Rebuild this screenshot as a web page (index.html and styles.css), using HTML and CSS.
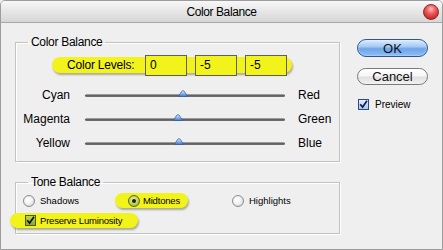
FILE: index.html
```html
<!DOCTYPE html>
<html>
<head>
<meta charset="utf-8">
<title>Color Balance</title>
<link rel="stylesheet" href="styles.css">
</head>
<body>
<div class="window">
  <div class="titlebar">
    <span></span>
    <span class="title">Color Balance</span>
    <span class="close"></span>
  </div>
  <div class="body">
    <div class="left">
      <fieldset class="group g1">
        <legend>Color Balance</legend>
        <div class="levels">
          <span class="levels-label">Color Levels:</span>
          <span class="field">0</span>
          <span class="field">-5</span>
          <span class="field">-5</span>
        </div>
        <div class="slider-row">
          <span class="lab-l">Cyan</span>
          <div class="track"><span class="thumb" style="left:98px"><svg width="10" height="7" viewBox="0 0 10 7"><defs><linearGradient id="tg" x1="0" y1="0" x2="0" y2="1"><stop offset="0" stop-color="#e4eefc"/><stop offset="0.5" stop-color="#8fb6ea"/><stop offset="1" stop-color="#3b74c8"/></linearGradient></defs><path d="M0.5 6.5 L3.6 1.4 Q5 -0.2 6.4 1.4 L9.5 6.5 Z" fill="url(#tg)" stroke="#3a62a0" stroke-width="0.8"/></svg></span></div>
          <span class="lab-r">Red</span>
        </div>
        <div class="slider-row">
          <span class="lab-l">Magenta</span>
          <div class="track"><span class="thumb" style="left:93px"><svg width="10" height="7" viewBox="0 0 10 7"><path d="M0.5 6.5 L3.6 1.4 Q5 -0.2 6.4 1.4 L9.5 6.5 Z" fill="url(#tg)" stroke="#3a62a0" stroke-width="0.8"/></svg></span></div>
          <span class="lab-r">Green</span>
        </div>
        <div class="slider-row">
          <span class="lab-l">Yellow</span>
          <div class="track"><span class="thumb" style="left:94px"><svg width="10" height="7" viewBox="0 0 10 7"><path d="M0.5 6.5 L3.6 1.4 Q5 -0.2 6.4 1.4 L9.5 6.5 Z" fill="url(#tg)" stroke="#3a62a0" stroke-width="0.8"/></svg></span></div>
          <span class="lab-r">Blue</span>
        </div>
      </fieldset>
      <fieldset class="group g2">
        <legend>Tone Balance</legend>
        <div class="tones">
          <div class="opt shadows"><span class="radio"></span><span>Shadows</span></div>
          <div class="opt midtones hl"><span class="radio on"><span class="dot"></span></span><span>Midtones</span></div>
          <div class="opt highlights"><span class="radio"></span><span>Highlights</span></div>
        </div>
        <div class="lum hl">
          <span class="check green"><svg width="11" height="11" viewBox="0 0 11 11"><path d="M2.2 5.2 L4.6 8 L9 1.8" fill="none" stroke="#0c1a0c" stroke-width="1.7"/></svg></span>
          <span>Preserve Luminosity</span>
        </div>
      </fieldset>
    </div>
    <div class="right">
      <div class="btn ok">OK</div>
      <div class="btn cancel">Cancel</div>
      <div class="preview">
        <span class="check blue"><svg width="11" height="11" viewBox="0 0 11 11"><path d="M2.2 5.2 L4.6 8 L9 1.8" fill="none" stroke="#0f1f55" stroke-width="1.7"/></svg></span>
        <span>Preview</span>
      </div>
    </div>
  </div>
</div>
</body>
</html>
```
FILE: styles.css
```css
html, body {
  margin: 0;
  padding: 0;
  background: #efefef;
}
body {
  font-family: "Liberation Sans", Arial, sans-serif;
  color: #000;
}
.window {
  width: 443px;
  height: 250px;
  box-sizing: border-box;
  border: 1px solid #9c9c9c;
  border-radius: 5px 5px 0 0;
  background: #efefef;
  overflow: hidden;
}
.titlebar {
  height: 21px;
  border-bottom: 1px solid #a8a8a8;
  background: linear-gradient(#f8f8f8, #e6e6e6 50%, #d6d6d6);
  display: grid;
  grid-template-columns: 1fr auto 1fr;
  align-items: center;
}
.title {
  font-size: 12px;
  letter-spacing: -0.4px;
  padding-top: 1px;
}
.close {
  justify-self: end;
  margin-right: 3px;
  width: 14px;
  height: 14px;
  border-radius: 50%;
  border: 1px solid #8e2a2a;
  background: radial-gradient(circle at 50% 30%, #ffc0c0 0, #f06060 35%, #c82424 80%, #a01818 100%);
  margin-top: 1px;
}
.body {
  display: flex;
  align-items: flex-start;
  gap: 17px;
  padding: 12px 0 0 14px;
}
.left {
  width: 325px;
}
.group {
  margin: 0;
  padding: 0;
  min-width: 0;
  border: 1px solid #c2c2c2;
  box-shadow: 1px 1px 0 #fff, inset 1px 1px 0 #fff;
}
.group legend {
  margin-left: 12px;
  padding: 0 3px;
  font-size: 12px;
  line-height: 14px;
  letter-spacing: -0.3px;
}
.g1 {
  padding-bottom: 6px;
}
.g2 {
  margin-top: 13px;
  padding-bottom: 5px;
}
.hl {
  background: #f3f31c;
  box-shadow: 1px 2px 2px rgba(90, 90, 40, 0.45);
}
.levels {
  margin: 8px 0 10px 36px;
  width: 240px;
  height: 16px;
  box-sizing: border-box;
  padding: 0 5px 0 15px;
  display: flex;
  align-items: center;
  background: #f3f31c;
  border-radius: 8px;
  box-shadow: 1px 2px 2px rgba(90, 90, 40, 0.45);
}
.levels-label {
  width: 78px;
  font-size: 12px;
  letter-spacing: -0.2px;
}
.field {
  flex: none;
  width: 42px;
  height: 21px;
  box-sizing: border-box;
  border: 1px solid #5e5e5e;
  background: #f3f31c;
  padding-left: 4px;
  font-size: 12px;
  line-height: 19px;
}
.field + .field {
  margin-left: 8px;
}
.slider-row {
  height: 24px;
  display: flex;
  align-items: center;
  font-size: 12px;
}
.lab-l {
  width: 54px;
  text-align: right;
}
.track {
  position: relative;
  margin-left: 15px;
  width: 200px;
  height: 3px;
  border-radius: 2px;
  background: linear-gradient(#b8b8b8, #505050 60%, #808080);
}
.thumb {
  position: absolute;
  top: -4px;
  width: 10px;
  height: 7px;
  margin-left: -5px;
}
.thumb svg {
  display: block;
}
.lab-r {
  margin-left: 13px;
}
.tones {
  margin-top: 4px;
  height: 15px;
  display: flex;
  align-items: center;
}
.opt {
  display: flex;
  align-items: center;
  font-size: 9.5px;
  height: 15px;
  box-sizing: border-box;
}
.shadows {
  margin-left: 7px;
  width: 92px;
  gap: 5px;
}
.midtones {
  width: 73px;
  padding-left: 13px;
  border-radius: 8px;
  gap: 3px;
  letter-spacing: -0.2px;
}
.highlights {
  margin-left: 44px;
  gap: 5px;
}
.radio {
  flex: none;
  width: 12px;
  height: 12px;
  box-sizing: border-box;
  border-radius: 50%;
  border: 1px solid #8c8c8c;
  background: radial-gradient(circle at 40% 40%, #ffffff 0, #f4f4f4 40%, #c8c8c8 100%);
  display: flex;
  align-items: center;
  justify-content: center;
}
.radio.on {
  border-color: #5c6a2c;
  background: radial-gradient(circle at 45% 40%, #eef4b0 0, #b8cc4c 60%, #7c9430 100%);
}
.dot {
  width: 4px;
  height: 4px;
  border-radius: 50%;
  background: #1a2410;
}
.lum {
  margin: 5px 0 0 -6px;
  width: 128px;
  height: 15px;
  box-sizing: border-box;
  padding-left: 15px;
  border-radius: 8px;
  display: flex;
  align-items: center;
  gap: 4px;
  font-size: 9.5px;
  letter-spacing: -0.2px;
}
.check {
  flex: none;
  width: 11px;
  height: 11px;
  box-sizing: border-box;
  display: flex;
}
.check svg {
  display: block;
  margin: -1px;
}
.check.green {
  border: 1px solid #4a5a20;
  background: linear-gradient(#c2d450, #8ea434);
}
.check.blue {
  border: 1px solid #2a4c86;
  background: linear-gradient(#e4eefc, #a8c6ee);
}
.right {
  padding-top: 4px;
  display: flex;
  flex-direction: column;
}
.btn {
  width: 71px;
  height: 18px;
  box-sizing: border-box;
  border-radius: 9px;
  display: flex;
  align-items: center;
  justify-content: center;
  font-family: "Liberation Sans", Arial, sans-serif;
  font-size: 13px;
  color: #111;
}
.ok {
  border: 1px solid #2c5690;
  background: linear-gradient(#dcebfd 0, #a7ccf6 40%, #6ea4ea 55%, #8cbcf4 100%);
  box-shadow: inset 0 0 2px rgba(255,255,255,0.8);
}
.cancel {
  margin-top: 11px;
  height: 17px;
  border: 1px solid #7a7a7a;
  background: linear-gradient(#ffffff 0, #f6f6f6 45%, #e0e0e0 55%, #f2f2f2 100%);
}
.preview {
  margin: 14px 0 0 1px;
  display: flex;
  align-items: center;
  gap: 6px;
  font-size: 10px;
}
```
